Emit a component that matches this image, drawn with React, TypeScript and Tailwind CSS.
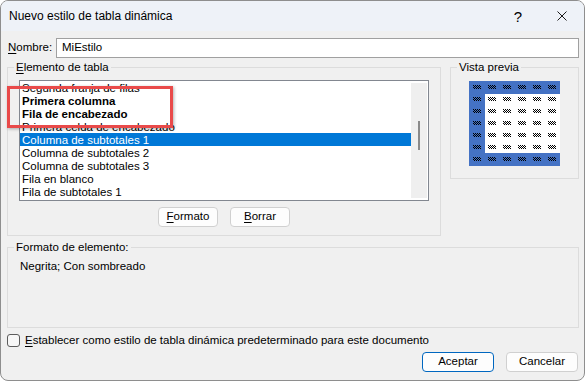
import React from "react"

const items = [
  { label: "Segunda franja de filas" },
  { label: "Primera columna", bold: true },
  { label: "Fila de encabezado", bold: true },
  { label: "Primera celda de encabezado" },
  { label: "Columna de subtotales 1", selected: true },
  { label: "Columna de subtotales 2" },
  { label: "Columna de subtotales 3" },
  { label: "Fila en blanco" },
  { label: "Fila de subtotales 1" },
]

// tiny dithered mark drawn in every preview cell
const markPixels: [number, number][] = []
for (let y = 0; y < 4; y++) {
  for (let x = 0; x < 8; x++) {
    if ((x + y) % 2 === 0 || (y === 1 && x % 4 === 1) || (y === 2 && x % 4 === 2)) markPixels.push([x, y])
  }
}

function Preview() {
  const cols = [4, 19, 34, 49, 64, 79]
  const rows = [6, 18, 30, 42, 54, 66, 78]
  return (
    <svg width="91" height="85" viewBox="0 0 91 85" shapeRendering="crispEdges">
      <rect width="91" height="85" fill="#4472c4" />
      <rect x="16" y="13" width="75" height="59" fill="#fff" />
      {rows.map((cy) =>
        cols.map((cx) => (
          <g key={`${cx}-${cy}`} transform={`translate(${cx} ${cy - 2})`}>
            {markPixels.map(([x, y]) => (
              <rect key={`${x}-${y}`} x={x} y={y} width="1" height="1" fill="#000" />
            ))}
          </g>
        ))
      )}
    </svg>
  )
}

function Btn({ children, primary }: { children: React.ReactNode; primary?: boolean }) {
  return (
    <div
      className={
        "w-[72px] h-[20px] rounded-[4px] border bg-[#fdfdfd] flex items-center justify-center " +
        (primary ? "border-[#0067c0]" : "border-[#d0d0d0]")
      }
    >
      {children}
    </div>
  )
}

export default function App() {
  return (
    <div className="relative w-[586px] h-[382px] bg-white font-['Liberation_Sans',Arial,sans-serif] text-[11.5px] text-black">
      <div className="w-[585px] h-[381px] border border-[#8e8e8e] rounded-[8px] overflow-hidden bg-[#f0f0f0] flex flex-col">
        {/* title bar */}
        <div className="h-[30px] shrink-0 bg-[#eef2f8] flex items-center pl-[8px] text-[12px]">
          <span className="flex-1">Nuevo estilo de tabla dinámica</span>
          <span className="text-[15px] leading-none mr-[35px]">?</span>
          <svg width="10" height="10" viewBox="0 0 10 10" className="mr-[17px]">
            <path d="M0.5 0.5 L9.5 9.5 M9.5 0.5 L0.5 9.5" stroke="#1a1a1a" strokeWidth="1" />
          </svg>
        </div>

        <div className="flex flex-col pl-[6px] pr-[5px]">
          {/* nombre */}
          <div className="mt-[7px] flex items-center h-[20px]">
            <div className="w-[49px] pl-[1px]">
              <u className="underline-offset-2">N</u>ombre:
            </div>
            <div className="flex-1 h-[20px] border border-[#a0a0a0] bg-white pl-[5px] flex items-center">MiEstilo</div>
          </div>

          <div className="mt-[2px] flex items-start gap-[9px]">
            {/* elemento de tabla */}
            <fieldset className="w-[434px] border border-[#dcdcdc] p-0 m-0">
              <legend className="ml-[6px] px-[2px] leading-[14px]">
                <u className="underline-offset-2">E</u>lemento de tabla
              </legend>
              <div className="px-[11px] pt-[6px] pb-[8px]">
                <div className="h-[121px] border border-[#828790] bg-white flex">
                  <div className="flex-1 flex flex-col overflow-hidden">
                    {items.map((it) => (
                      <div
                        key={it.label}
                        className={
                          "h-[13px] shrink-0 leading-[14px] pl-[2px] whitespace-nowrap " +
                          (it.bold ? "font-bold " : "") +
                          (it.selected ? "bg-[#0078d7] text-white" : "")
                        }
                      >
                        {it.label}
                      </div>
                    ))}
                  </div>
                  <div className="w-[16px] my-[2px] mr-[1px] bg-[#efefef] flex flex-col items-center">
                    <div className="mt-[38px] w-[2px] h-[29px] bg-[#8a8a8a]" />
                  </div>
                </div>
                <div className="mt-[6px] flex justify-center gap-[12px]">
                  <div className="w-[60px] h-[20px] rounded-[4px] border border-[#d0d0d0] bg-[#fdfdfd] flex items-center justify-center">
                    <span><u className="underline-offset-2">F</u>ormato</span>
                  </div>
                  <div className="w-[60px] h-[20px] rounded-[4px] border border-[#d0d0d0] bg-[#fdfdfd] flex items-center justify-center">
                    <span><u className="underline-offset-2">B</u>orrar</span>
                  </div>
                </div>
              </div>
            </fieldset>

            {/* vista previa */}
            <fieldset className="w-[129px] border border-[#dcdcdc] p-0 m-0">
              <legend className="ml-[6px] px-[2px] leading-[14px]">Vista previa</legend>
              <div className="flex justify-center pt-[7px] pb-[12px]">
                <Preview />
              </div>
            </fieldset>
          </div>

          {/* formato de elemento */}
          <fieldset className="mt-[4px] h-[88px] border border-[#dcdcdc] p-0 m-0">
            <legend className="ml-[6px] px-[2px] leading-[14px]">Formato de elemento:</legend>
            <div className="mt-[5px] pl-[12px] leading-[15px]">Negrita; Con sombreado</div>
          </fieldset>

          {/* checkbox */}
          <div className="mt-[6px] h-[13px] flex items-center">
            <div className="w-[13px] h-[13px] border border-[#5c5c5c] rounded-[3px] bg-[#f7f7f7]" />
            <span className="ml-[5px]">
              <u className="underline-offset-2">E</u>stablecer como estilo de tabla dinámica predeterminado para este documento
            </span>
          </div>

          {/* buttons */}
          <div className="mt-[5px] flex justify-end gap-[12px] mr-[1px]">
            <Btn primary>Aceptar</Btn>
            <Btn>Cancelar</Btn>
          </div>
        </div>
      </div>

      {/* annotation */}
      <div className="absolute left-[7px] top-[86px] w-[166px] h-[42px] border-[3px] border-[#e94a4a] shadow-[1px_1px_3px_rgba(0,0,0,0.3)]" />
    </div>
  )
}
